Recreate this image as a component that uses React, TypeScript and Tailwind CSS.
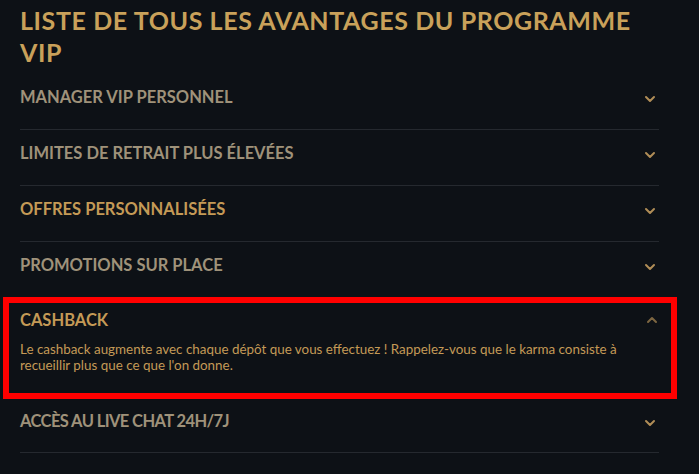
import { ChevronDown, ChevronUp } from "lucide-react";

const items = [
  { title: "MANAGER VIP PERSONNEL", tone: "gray" },
  { title: "LIMITES DE RETRAIT PLUS ÉLEVÉES", tone: "gray" },
  { title: "OFFRES PERSONNALISÉES", tone: "gold" },
  { title: "PROMOTIONS SUR PLACE", tone: "gray" },
];

const Row = ({ title, tone }: { title: string; tone: string }) => (
  <div className="flex items-start justify-between border-b border-[#25292f] pt-[11px] pb-[20px]">
    <span
      className={
        tone === "gold"
          ? "text-[16.5px] leading-6 font-bold text-[#c49a56]"
          : "text-[16.5px] leading-6 font-bold text-[#9f927a]"
      }
    >
      {title}
    </span>
    <ChevronDown className="mt-[6px] mr-[1px] h-4 w-4 text-[#b08d57]" strokeWidth={3} />
  </div>
);

export default function App() {
  return (
    <div className="min-h-[474px] w-full bg-[#0d1116] font-['Lato','Open_Sans',sans-serif]">
      <div className="w-[659px] pl-5 pt-[4px]">
        <h1 className="text-[25px] leading-[32px] font-bold tracking-[0.6px] text-[#c9a15a]">
          LISTE DE TOUS LES AVANTAGES DU PROGRAMME VIP
        </h1>
        <div className="mt-[6px]">
          {items.map((i) => (
            <Row key={i.title} title={i.title} tone={i.tone} />
          ))}
        </div>
      </div>
      <div className="-mt-[1px] ml-[3px] w-[674px] border-[6px] border-[#ff0000] pt-[5px] pr-[11px] pb-[20px] pl-[11px]">
        <div className="flex items-start justify-between">
          <span className="text-[16.5px] leading-6 font-bold text-[#c49a56]">CASHBACK</span>
          <ChevronUp className="mt-[4px] h-4 w-4 text-[#7d6641]" strokeWidth={3} />
        </div>
        <p className="mt-[9px] text-[13.4px] leading-4 text-[#c49a56]">
          Le cashback augmente avec chaque dépôt que vous effectuez ! Rappelez-vous que le karma consiste à
          <br />
          recueillir plus que ce que l'on donne.
        </p>
      </div>
      <div className="w-[659px] pl-5">
        <div className="flex items-start justify-between border-b border-[#25292f] pt-[10px] pb-[19px]">
          <span className="text-[16.5px] leading-6 font-bold tracking-[-0.6px] text-[#9f927a]">
            ACCÈS AU LIVE CHAT 24H/7J
          </span>
          <ChevronDown className="mt-[6px] mr-[1px] h-4 w-4 text-[#b08d57]" strokeWidth={3} />
        </div>
      </div>
    </div>
  );
}
